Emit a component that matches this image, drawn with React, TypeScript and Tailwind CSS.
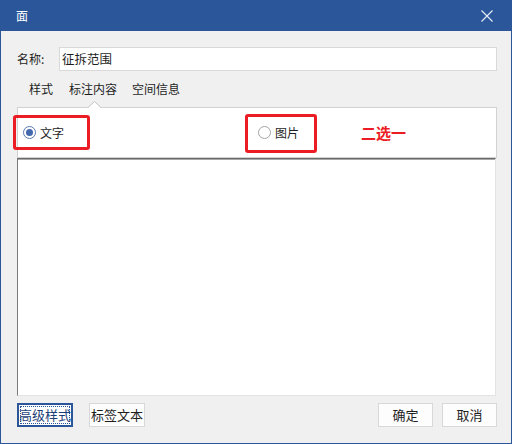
import React from "react";

const FONT = "font-['Microsoft_YaHei','Noto_Sans_CJK_SC',sans-serif]";

function Radio({ checked }: { checked: boolean }) {
  return (
    <span
      className={`w-[13px] h-[13px] rounded-full border bg-white flex items-center justify-center ${
        checked ? "border-[#5a7ab4]" : "border-[#a3a3a3]"
      }`}
    >
      {checked && <span className="w-[7px] h-[7px] rounded-full bg-[#4268ad]" />}
    </span>
  );
}

export default function App() {
  return (
    <div className={`w-[512px] h-[444px] bg-[#f0f0f0] border border-[#2b579a] flex flex-col text-[12px] text-[#1e1e1e] ${FONT}`}>
      {/* title bar */}
      <div className="h-[30px] bg-[#2b579a] flex items-center justify-between pl-[15px] pr-[18px] text-white">
        <span className="text-[12px] leading-none">面</span>
        <svg width="12" height="12" viewBox="0 0 12 12">
          <path d="M0.5 0.5 L11.5 11.5 M11.5 0.5 L0.5 11.5" stroke="#e8eef7" strokeWidth="1.1" />
        </svg>
      </div>

      <div className="pl-[16px] pt-[16px] flex flex-col">
        {/* name */}
        <div className="flex items-center h-[24px]">
          <span className="w-[42px]">名称:</span>
          <div className="w-[438px] h-[24px] bg-white border border-[#d9d9d9] flex items-center px-[2px] text-[12.5px]">
            征拆范围
          </div>
        </div>

        {/* tabs */}
        <div className="relative h-[36px] flex items-center">
          <span className="ml-[12px]">样式</span>
          <span className="ml-[16px]">标注内容</span>
          <span className="ml-[15px]">空间信息</span>
          <svg className="absolute left-[71px] top-[30px] z-10" width="13" height="7" viewBox="0 0 13 7">
            <path d="M0 7 L6.5 0.5 L13 7 Z" fill="#ffffff" />
            <path d="M0 6.5 L6.5 0.5 L13 6.5" fill="none" stroke="#c4c4c4" strokeWidth="1" />
          </svg>
        </div>

        {/* pane */}
        <div className="relative w-[480px] h-[51px] bg-white border border-[#d2d2d2] flex items-center">
          <div className="ml-[5px] flex items-center gap-[4px]">
            <Radio checked />
            <span>文字</span>
          </div>
          <div className="ml-[194px] flex items-center gap-[4px]">
            <Radio checked={false} />
            <span>图片</span>
          </div>
          <span className="ml-[62px] text-[15px] font-bold text-[#ec1c24] leading-none">二选一</span>

          <div className="absolute left-[-5px] top-[7px] w-[77px] h-[35px] border-[3px] border-[#ec1c24] rounded-[3px]" />
          <div className="absolute left-[227px] top-[6px] w-[72px] h-[39px] border-[3px] border-[#ec1c24] rounded-[3px]" />
        </div>

        {/* text area */}
        <div className="w-[479px] h-[238px] bg-white border-t border-l border-t-[#6a6a6a] border-l-[#7a7a7a] border-r border-b border-r-[#e3e3e3] border-b-[#e3e3e3] shadow-[inset_0_1px_0_#a8a8a8]" />

        {/* buttons */}
        <div className="mt-[7px] flex h-[24px] w-[480px] text-[13px] whitespace-nowrap">
          <div className="w-[56px] h-[24px] border-2 border-[#2b579a] bg-white p-[1px]">
            <div className="w-full h-full border border-dotted border-[#2b579a] flex items-center justify-center text-[#1d3f78] overflow-visible">
              高级样式
            </div>
          </div>
          <div className="ml-[16px] w-[56px] h-[24px] border border-[#d8d8d8] bg-[#fdfdfd] flex items-center justify-center">
            标签文本
          </div>
          <div className="ml-auto w-[55px] h-[24px] border border-[#d8d8d8] bg-[#fdfdfd] flex items-center justify-center">
            确定
          </div>
          <div className="ml-[9px] w-[55px] h-[24px] border border-[#d8d8d8] bg-[#fdfdfd] flex items-center justify-center">
            取消
          </div>
        </div>
      </div>
    </div>
  );
}
